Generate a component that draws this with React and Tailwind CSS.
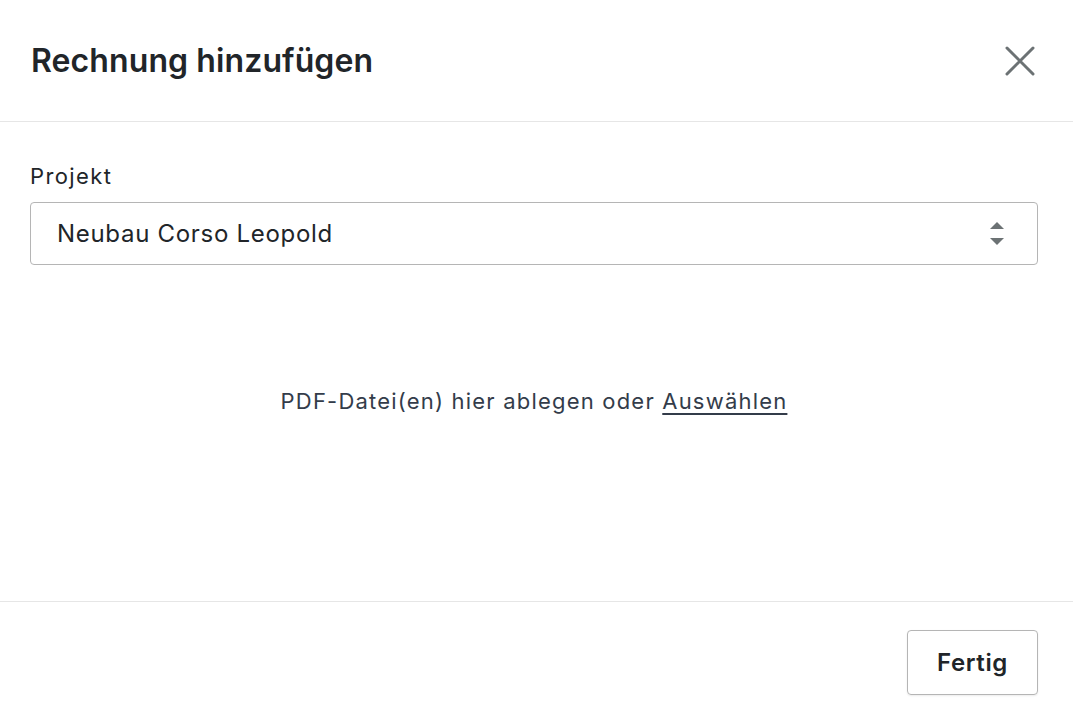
import React from 'react';

export default function App() {
  return (
    <div className="w-[1073px] h-[706px] bg-white flex flex-col font-['Inter',sans-serif] text-[#212529]">
      <div className="h-[122px] flex items-center justify-between pl-[31px] pr-[37px] border-b border-[#e6e6e6]">
        <h1 className="text-[32px] font-semibold tracking-[0.1px]">Rechnung hinzufügen</h1>
        <button className="w-[32px] h-[32px] flex items-center justify-center text-[#6c7274]">
          <svg width="30" height="30" viewBox="0 0 30 30" fill="none" stroke="currentColor" strokeWidth="3" strokeLinecap="round">
            <path d="M2 2L28 28M28 2L2 28" />
          </svg>
        </button>
      </div>

      <div className="h-[479px] pt-[38px] pl-[30px] pr-[35px]">
        <label className="block text-[22px] leading-[32px] mb-[10px] tracking-[1.4px]">Projekt</label>
        <div className="h-[63px] border border-[#b5b5b5] rounded-[4px] flex items-center justify-between pl-[26px] pr-[33px]">
          <span className="text-[24px] tracking-[0.7px]">Neubau Corso Leopold</span>
          <svg width="14" height="24" viewBox="0 0 14 24" fill="#6c7274">
            <path d="M7 0L14 7H0Z" />
            <path d="M0 16H14L7 23Z" />
          </svg>
        </div>
        <div className="h-[212px] mt-[30px] flex items-center justify-center text-[22px] tracking-[1.2px] text-[#333c4a]">
          <span>
            PDF-Datei(en) hier ablegen oder <a href="#" className="underline underline-offset-[4px]">Auswählen</a>
          </span>
        </div>
      </div>

      <div className="flex-1 border-t border-[#e6e6e6] flex justify-end items-start pt-[28px] pr-[35px]">
        <button className="w-[131px] h-[65px] border border-[#b5b5b5] rounded-[4px] text-[24px] font-semibold tracking-[0.6px] shadow-[0_1px_2px_rgba(0,0,0,0.08)]">
          Fertig
        </button>
      </div>
    </div>
  );
}
